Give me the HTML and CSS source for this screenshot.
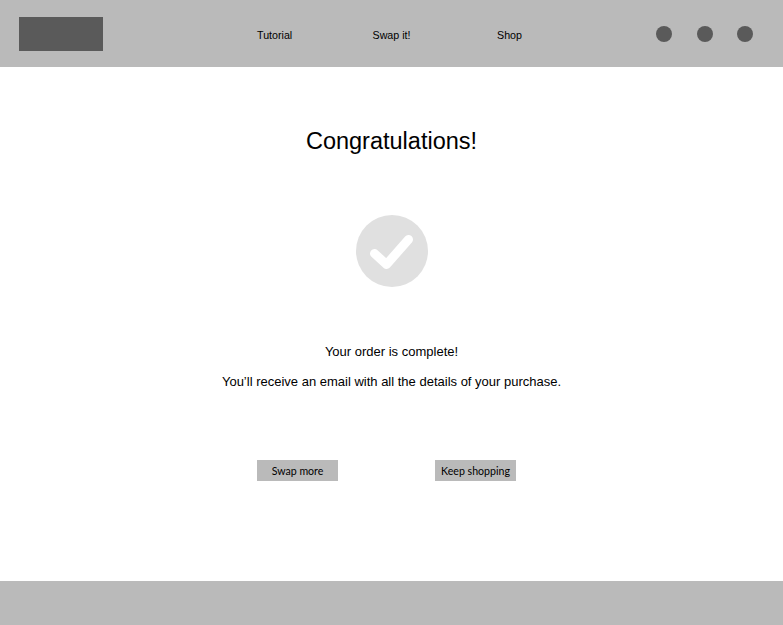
FILE: index.html
```html
<!DOCTYPE html>
<html lang="en">
<head>
<meta charset="utf-8">
<title>Order complete</title>
<link rel="stylesheet" href="styles.css">
</head>
<body>
<div class="page">
  <header class="topbar">
    <div class="logo"></div>
    <nav class="nav">
      <a class="nav-link nav-tutorial">Tutorial</a>
      <a class="nav-link nav-swap">Swap it!</a>
      <a class="nav-link nav-shop">Shop</a>
    </nav>
    <div class="dots">
      <span class="dot"></span>
      <span class="dot"></span>
      <span class="dot"></span>
    </div>
  </header>
  <main class="content">
    <h1 class="title">Congratulations!</h1>
    <svg class="check" width="72" height="72" viewBox="0 0 72 72" aria-hidden="true">
      <circle cx="36" cy="36" r="36" fill="#e0e0e0"/>
      <path d="M18.5 38.5 L30.5 49.5 L52.5 24.5" fill="none" stroke="#fff" stroke-width="9" stroke-linecap="round" stroke-linejoin="round"/>
    </svg>
    <p class="msg msg-first">Your order is complete!</p>
    <p class="msg msg-second">You’ll receive an email with all the details of your purchase.</p>
    <div class="actions">
      <button class="btn">Swap more</button>
      <button class="btn">Keep shopping</button>
    </div>
  </main>
  <footer class="bottombar"></footer>
</div>
</body>
</html>
```
FILE: styles.css
```css
* { box-sizing: border-box; }
html, body { margin: 0; padding: 0; background: #fff; }
body { font-family: "Liberation Sans", Arial, sans-serif; color: #000; }
.page { width: 783px; height: 625px; display: flex; flex-direction: column; overflow: hidden; }
.topbar { height: 67px; background: #bababa; display: flex; align-items: flex-start; padding: 17px 30px 0 18.5px; flex: none; }
.logo { width: 84.5px; height: 34px; background: #5a5a5a; flex: none; }
.nav { display: flex; margin-left: 154px; margin-top: 11px; font-size: 10.7px; line-height: 14px; flex: none; }
.nav-link { color: #000; white-space: nowrap; }
.nav-tutorial { width: 115.5px; }
.nav-swap { width: 124.5px; }
.nav-shop { width: 40px; }
.dots { display: flex; gap: 24.5px; margin-left: auto; margin-top: 9px; }
.dot { width: 16px; height: 16px; border-radius: 50%; background: #5a5a5a; display: block; }
.content { flex: 1; display: flex; flex-direction: column; align-items: center; }
.title { margin: 59px 0 0; font-size: 23.5px; line-height: 30px; font-weight: 400; }
.check { display: block; margin: 59px 0 0; }
.msg { margin: 0; font-size: 13px; line-height: 18px; }
.msg-first { margin-top: 55.5px; }
.msg-second { margin-top: 12px; }
.actions { display: flex; gap: 97px; margin-top: 69.5px; margin-right: 10px; }
.btn { width: 81px; height: 21px; padding: 2px 0 0; border: 0; border-radius: 0; background: #bababa; color: #000; font-family: Lato, sans-serif; font-size: 10.6px; line-height: 19px; }
.bottombar { height: 44px; background: #bababa; flex: none; }
```
